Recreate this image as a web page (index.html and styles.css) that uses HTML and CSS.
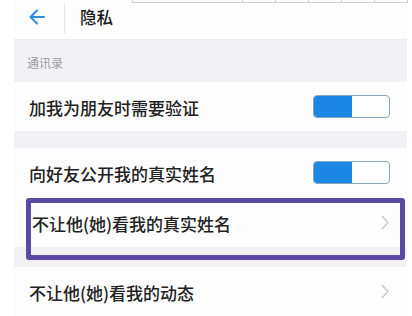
FILE: index.html
```html
<!DOCTYPE html>
<html lang="zh">
<head>
    <meta charset="UTF-8">
    <meta name="viewport" content="width=device-width, initial-scale=1.0">
    <title>隐私</title>
    <link rel="stylesheet" href="styles.css">
</head>
<body>

    <div class="grille">
        <div class="cell large"></div>
        <div class="cell"></div>
        <div class="cell"></div>
        <div class="cell"></div>
        <div class="cell"></div>
        <div class="cell"></div>
    </div>

    <div class="page">

        <div class="entete">
            <svg class="retour" width="16" height="16" viewBox="0 0 16 16">
                <path d="M15 8 H2 M8 1.5 L1.5 8 L8 14.5" fill="none" stroke="#2b8ae2" stroke-width="2" stroke-linecap="round" stroke-linejoin="round"/>
            </svg>
            <div class="separateur"></div>
            <h1>隐私</h1>
        </div>

        <div class="section">通讯录</div>

        <div class="ligne">
            <span>加我为朋友时需要验证</span>
            <div class="switch"><div class="on"></div></div>
        </div>

        <div class="espace"></div>

        <div class="ligne">
            <span>向好友公开我的真实姓名</span>
            <div class="switch"><div class="on"></div></div>
        </div>

        <div class="ligne encadre">
            <span>不让他(她)看我的真实姓名</span>
            <svg class="fleche" width="8" height="15" viewBox="0 0 8 15">
                <polyline points="1,1 7,7.5 1,14" fill="none" stroke="#c6c6c6" stroke-width="1.3"/>
            </svg>
            <div class="cadre"></div>
        </div>

        <div class="espace grand"></div>

        <div class="ligne">
            <span>不让他(她)看我的动态</span>
            <svg class="fleche" width="8" height="15" viewBox="0 0 8 15">
                <polyline points="1,1 7,7.5 1,14" fill="none" stroke="#c6c6c6" stroke-width="1.3"/>
            </svg>
        </div>

    </div>

</body>
</html>
```

FILE: styles.css
```css
body {
    margin: 0;
    padding: 0;
    background: #ffffff;
    font-family: "Noto Sans CJK SC", "Noto Sans", sans-serif;
    color: #1f1f1f;
    overflow: hidden;
    height: 316px;
    position: relative;
}

.grille {
    position: absolute;
    top: 0;
    left: 132px;
    display: flex;
    z-index: 10;
}

.grille .cell {
    width: 32px;
    height: 2px;
    border-left: 1px solid #cfcfcf;
    border-bottom: 1px solid #cfcfcf;
}

.grille .cell.large {
    width: 109px;
}

.grille .cell:last-child {
    border-right: 1px solid #cfcfcf;
}

.page {
    margin-left: 14px;
    width: 393px;
    background: #f2f2f6;
    height: 316px;
}

.entete {
    height: 40px;
    background: #fdfdfd;
    display: flex;
    align-items: center;
    border-bottom: 1px solid #ececef;
    box-sizing: border-box;
}

.retour {
    margin-left: 15px;
    margin-top: -6px;
}

.separateur {
    width: 1px;
    height: 31px;
    background: #e6e6e6;
    margin-left: 19px;
    margin-top: -2px;
}

h1 {
    margin: 0 0 0 15px;
    font-size: 16.5px;
    font-weight: 500;
    color: #1a1a1a;
    margin-top: -6px;
}

.section {
    height: 42px;
    box-sizing: border-box;
    padding: 15px 0 0 13px;
    font-size: 12px;
    color: #9a9a9f;
    line-height: 16px;
}

.ligne {
    height: 49px;
    background: #fdfdfd;
    display: flex;
    align-items: center;
    justify-content: space-between;
    padding: 0 17px 0 15px;
    font-size: 17px;
    font-weight: 500;
    color: #222222;
    position: relative;
}

.ligne span {
    margin-top: 2px;
}

.ligne + .ligne {
    height: 50px;
}

.ligne.encadre {
    height: 50px;
    padding-left: 18px;
}

.fleche {
    margin-right: 1px;
}

.switch {
    width: 75px;
    height: 21px;
    border: 1px solid #8aa6bd;
    border-radius: 4px;
    background: #ffffff;
    overflow: hidden;
}

.switch .on {
    width: 38px;
    height: 100%;
    background: #1b88e4;
}

.espace {
    height: 17px;
}

.espace.grand {
    height: 20px;
}

.cadre {
    position: absolute;
    left: 12px;
    top: 1px;
    width: 369px;
    height: 52px;
    border: 5px solid #5b49a3;
    border-radius: 3px;
    z-index: 5;
}
```
